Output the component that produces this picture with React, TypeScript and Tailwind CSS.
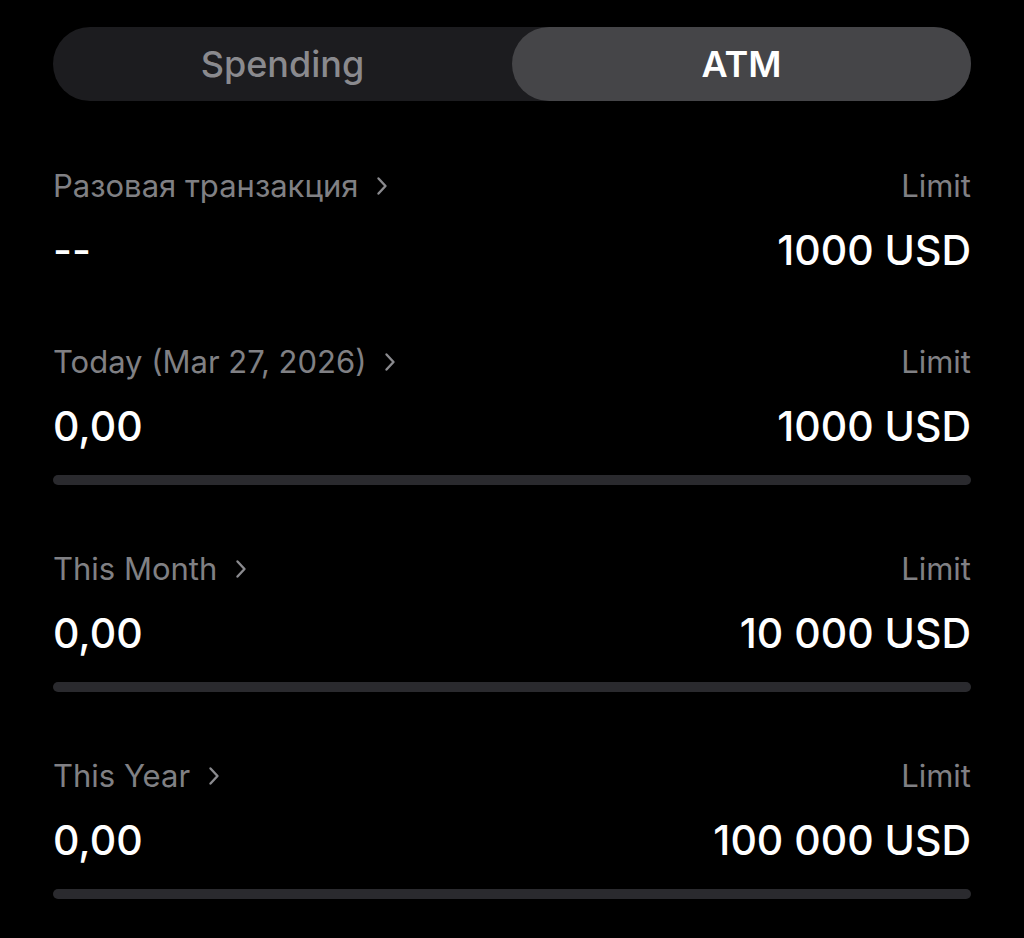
import React from "react";

const Chevron = () => (
  <svg width="14" height="22" viewBox="0 0 14 22" fill="none" className="ml-[17px] shrink-0">
    <path d="M3.5 3.5 L10.5 11 L3.5 18.5" stroke="#8a8a8e" strokeWidth="2.4" strokeLinecap="round" strokeLinejoin="round" />
  </svg>
);

type Row = { label: string; value: string; limit: string; bar: boolean };

const rows: Row[] = [
  { label: "Разовая транзакция", value: "--", limit: "1000 USD", bar: false },
  { label: "Today (Mar 27, 2026)", value: "0,00", limit: "1000 USD", bar: true },
  { label: "This Month", value: "0,00", limit: "10 000 USD", bar: true },
  { label: "This Year", value: "0,00", limit: "100 000 USD", bar: true },
];

export default function App() {
  return (
    <div
      className="w-[1024px] h-[938px] bg-black overflow-hidden px-[53px] pt-[27px]"
      style={{ fontFamily: "Inter, 'Noto Sans', sans-serif" }}
    >
      <div className="flex h-[74px] rounded-full bg-[#1c1c1f]">
        <div className="flex-1 flex items-center justify-center text-[36px] font-medium text-[#8a8a8e]">
          Spending
        </div>
        <div className="flex-1 flex items-center justify-center rounded-full bg-[#454548] text-[36px] font-semibold text-white">
          ATM
        </div>
      </div>

      <div className="mt-[65px] flex flex-col gap-[64px]">
        {rows.map((r, i) => (
          <div key={i} className={`flex flex-col ${i === 0 ? "pb-[2px]" : ""}`}>
            <div className="flex items-center justify-between h-[40px] text-[31px] text-[#808084]">
              <div className="flex items-center">
                <span>{r.label}</span>
                <Chevron />
              </div>
              <span>Limit</span>
            </div>
            <div className="mt-[20px] flex items-center justify-between h-[50px] text-[41px] font-medium text-white">
              <span>{r.value}</span>
              <span>{r.limit}</span>
            </div>
            {r.bar && <div className="mt-[23px] h-[10px] rounded-full bg-[#2a2a2e]" />}
          </div>
        ))}
      </div>
    </div>
  );
}
